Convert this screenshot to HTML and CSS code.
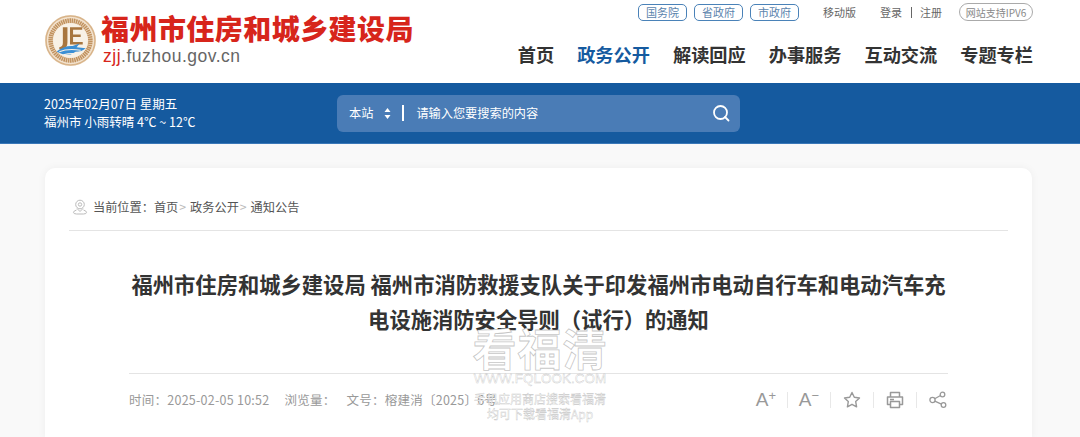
FILE: index.html
```html
<!DOCTYPE html>
<html lang="zh-CN">
<head>
    <meta charset="UTF-8">
    <title>福州市住房和城乡建设局</title>
    <link rel="stylesheet" href="styles.css">
</head>
<body>
    <header class="header">
        <a class="logo">
            <svg class="logo-mark" viewBox="0 0 52 52" width="53" height="53">
                <circle cx="26" cy="26" r="25" fill="#f3e3cf"/>
                <circle cx="26" cy="26" r="24" fill="none" stroke="#d8b48a" stroke-width="1.500"/>
                <circle cx="26" cy="26" r="19.500" fill="none" stroke="#c1925f" stroke-width="4.500" stroke-dasharray="1.500 .6"/>
                <circle cx="26" cy="26" r="17" fill="#f8f1e6"/>
                <path d="M18.500 13h4.500v15q0 5-4 6.500h-4v-2q3.500 0 3.500-4zM25.500 13h12v2.500h-9v4.500h7.500v2.500h-7.500v5h9.500v2.500h-12.500z" fill="#a8763f"/>
                <path d="M12 37q8-6 16-5.500l7-2.500-3 3.500 9 1q-4 3.500-10 3.500l-5 3q-8 .5-14-3.500z" fill="#3b8fd4"/>
                <path d="M15 37q8-3.500 21-1.500M19 40q6-1.500 12-1" fill="none" stroke="#f8f1e6" stroke-width="1.100"/>
            </svg>
            <div class="logo-text">
                <div class="logo-title">福州市住房和城乡建设局</div>
                <div class="logo-url"><span class="logo-url-red">zjj</span>.fuzhou.gov.cn</div>
            </div>
        </a>
        <div class="header-right">
            <div class="toplinks">
                <a class="pill">国务院</a>
                <a class="pill">省政府</a>
                <a class="pill">市政府</a>
                <a class="toplink mobile">移动版</a>
                <a class="toplink">登录</a>
                <span class="toplink-sep"></span>
                <a class="toplink">注册</a>
                <span class="ipv6">网站支持IPV6</span>
            </div>
            <nav class="nav">
                <a>首页</a>
                <a class="active">政务公开</a>
                <a>解读回应</a>
                <a>办事服务</a>
                <a>互动交流</a>
                <a>专题专栏</a>
            </nav>
        </div>
    </header>

    <div class="band">
        <div class="weather">
            <p>2025年02月07日 星期五</p>
            <p>福州市 小雨转晴 4℃ ~ 12℃</p>
        </div>
        <div class="search">
            <span class="scope">本站</span>
            <svg class="scope-arrows" viewBox="0 0 7 11" width="7" height="11">
                <path d="M3.500 0l3 4h-6zM3.500 11l-3-4h6z" fill="#fff"/>
            </svg>
            <span class="search-sep"></span>
            <span class="search-hint">请输入您要搜索的内容</span>
            <svg class="search-icon" viewBox="0 0 18 18" width="18" height="18">
                <circle cx="8.500" cy="8.500" r="6.500" fill="none" stroke="#fff" stroke-width="1.800"/>
                <path d="M13 13l3.500 3.500" stroke="#fff" stroke-width="1.800" stroke-linecap="round"/>
            </svg>
        </div>
    </div>

    <main class="card">
        <div class="crumbs">
            <svg class="crumb-icon" viewBox="0 0 16 16" width="16" height="16">
                <circle cx="8" cy="5.500" r="4.300" fill="none" stroke="#bbb" stroke-width="1"/>
                <circle cx="8" cy="5.500" r="1.700" fill="none" stroke="#bbb" stroke-width="1"/>
                <path d="M5 9.500l3 3 3-3M4.500 11q-3 1-3 2.300 0 1.700 3 1.700h7q3 0 3-1.700 0-1.300-3-2.300" fill="none" stroke="#bbb" stroke-width="1"/>
            </svg>
            <span>当前位置：</span>
            <a>首页</a><i>&gt;</i>
            <a>政务公开</a><i>&gt;</i>
            <a>通知公告</a>
        </div>
        <div class="article">
            <h1>福州市住房和城乡建设局 福州市消防救援支队关于印发福州市电动自行车和电动汽车充电设施消防安全导则（试行）的通知</h1>
            <div class="meta">
                <div class="meta-info">
                    <span>时间：2025-02-05 10:52</span>
                    <span class="views">浏览量：</span>
                    <span>文号：榕建消〔2025〕6号</span>
                </div>
                <div class="tools">
                    <span class="tool font-tool">A<sup>+</sup></span>
                    <span class="tool font-tool">A<sup>−</sup></span>
                    <span class="tool">
                        <svg viewBox="0 0 20 20" width="20" height="20">
                            <path d="M10 2.500l2.300 4.800 5.200.7-3.800 3.600.9 5.200-4.600-2.500-4.600 2.500.9-5.200-3.800-3.600 5.200-.7z" fill="none" stroke="#999" stroke-width="1.400" stroke-linejoin="round"/>
                        </svg>
                    </span>
                    <span class="tool">
                        <svg viewBox="0 0 20 20" width="20" height="20">
                            <path d="M5.500 7V2.500h9V7M5.500 14.500H2.500V7h15v7.500h-3M5.500 11.500h9v6h-9zM5 9.500h4" fill="none" stroke="#999" stroke-width="1.500" stroke-linejoin="round"/>
                        </svg>
                    </span>
                    <span class="tool">
                        <svg viewBox="0 0 20 20" width="20" height="20">
                            <circle cx="4.500" cy="10" r="2.600" fill="none" stroke="#999" stroke-width="1.300"/>
                            <circle cx="14.500" cy="4.500" r="2.300" fill="none" stroke="#999" stroke-width="1.300"/>
                            <circle cx="15.500" cy="15" r="2.300" fill="none" stroke="#999" stroke-width="1.300"/>
                            <path d="M6.700 8.700l5.800-3.200M6.800 11.200l6.600 3" stroke="#999" stroke-width="1.300"/>
                        </svg>
                    </span>
                </div>
            </div>
        </div>
    </main>

    <div class="watermark">
        <div class="wm-name">看福清</div>
        <div class="wm-site">WWW.FQLOOK.COM</div>
        <div class="wm-line">手机应用商店搜索看福清</div>
        <div class="wm-line">均可下载看福清App</div>
    </div>
</body>
</html>
```

FILE: styles.css
```css
* {
    margin: 0;
    padding: 0;
    box-sizing: border-box;
}

body {
    position: relative;
    background: #f9f9f9;
    font-family: "Noto Sans CJK SC", "Noto Sans", sans-serif;
    color: #333;
}

.header {
    height: 83px;
    background: #fff;
    display: flex;
    justify-content: space-between;
    padding: 0 47px 0 44px;
}

.logo {
    display: flex;
    align-items: center;
    gap: 4px;
    padding-bottom: 3px;
}

.logo-title {
    font-size: 28px;
    line-height: 32px;
    font-weight: 900;
    color: #d7251b;
    letter-spacing: 0.45px;
    white-space: nowrap;
    margin-top: -2px;
}

.logo-url {
    font-family: "Liberation Sans", sans-serif;
    font-size: 17.500px;
    line-height: 20px;
    letter-spacing: 0.5px;
    color: #666;
    margin-top: 2px;
    padding-left: 2px;
}

.logo-url-red {
    color: #d7251b;
}

.header-right {
    display: flex;
    flex-direction: column;
    align-items: flex-end;
    padding-top: 3px;
}

.toplinks {
    display: flex;
    align-items: center;
    height: 18px;
    font-size: 11px;
}

.pill {
    width: 49px;
    height: 17px;
    margin-right: 7px;
    border: 1px solid #4a82b8;
    border-radius: 5px;
    color: #5b84ad;
    display: flex;
    align-items: center;
    justify-content: center;
}

.toplink {
    color: #666;
}

.mobile {
    margin: 0 24px 0 17px;
}

.toplink-sep {
    width: 1px;
    height: 11px;
    background: #666;
    margin: 0 8.500px;
}

.ipv6 {
    width: 74px;
    height: 18px;
    margin-left: 17px;
    border: 1px solid #aaa;
    border-radius: 9px;
    color: #888;
    font-size: 10px;
    display: flex;
    align-items: center;
    justify-content: center;
}

.nav {
    display: flex;
    gap: 23px;
    margin-top: 19px;
    font-size: 18.200px;
    line-height: 28px;
    font-weight: 700;
    color: #333;
}

.nav .active {
    color: #155a9f;
}

.band {
    height: 61px;
    background: #155a9f;
    border-bottom: 1px solid #3a78b8;
    display: flex;
    align-items: center;
    padding: 0 0 0 44px;
    color: #fff;
}

.weather {
    width: 293px;
    font-size: 12.500px;
    line-height: 18px;
}

.search {
    width: 403px;
    height: 37px;
    background: #4a7cb6;
    border-radius: 6px;
    display: flex;
    align-items: center;
    padding: 0 10px 0 12px;
    font-size: 12.200px;
}

.scope-arrows {
    margin-left: 11px;
}

.search-sep {
    width: 2px;
    height: 16px;
    background: #fff;
    margin: 0 12px 0 11px;
}

.search-hint {
    flex: 1;
}

.card {
    margin: 24px 48px 0 45px;
    height: 270px;
    background: #fff;
    border-radius: 10px 10px 0 0;
    box-shadow: 0 0 8px rgba(0, 0, 0, 0.05);
    padding: 0 24px;
}

.crumbs {
    height: 63px;
    padding-top: 15px;
    border-bottom: 1px solid #e4e4e4;
    display: flex;
    align-items: center;
    font-size: 12.200px;
    color: #555;
}

.crumb-icon {
    margin: 0 5px 0 3px;
}

.crumbs i {
    font-style: normal;
    color: #bbb;
    margin: 0 4px 0 1px;
}

.article {
    padding: 0 60px;
}

h1 {
    margin: 35px 0 0;
    height: 108px;
    border-bottom: 1px solid #e4e4e4;
    font-size: 21.300px;
    line-height: 35px;
    font-weight: 700;
    color: #333;
    text-align: center;
}

.meta {
    display: flex;
    justify-content: space-between;
    align-items: center;
    height: 52px;
}

.meta-info {
    display: flex;
    font-size: 12.500px;
    letter-spacing: 0.25px;
    color: #999;
    white-space: nowrap;
    margin-top: -1px;
}

.views {
    margin: 0 11px 0 15px;
}

.tools {
    display: flex;
    align-items: center;
}

.tool {
    width: 43px;
    height: 16px;
    border-right: 1px solid #e8e8e8;
    display: flex;
    align-items: center;
    justify-content: center;
    color: #999;
}

.tool:last-child {
    border-right: 0;
    width: 31px;
    justify-content: flex-end;
}

.font-tool {
    font-size: 19px;
    font-family: "Liberation Sans", sans-serif;
}

.font-tool sup {
    font-size: 13px;
    line-height: 0;
    margin-top: -9px;
}

.watermark {
    position: absolute;
    left: 440px;
    top: 322px;
    width: 200px;
    text-align: center;
    color: #fff;
    -webkit-text-stroke: 0.4px rgba(140, 140, 140, 0.5);
    pointer-events: none;
}

.wm-name {
    font-size: 44px;
    line-height: 50px;
    font-weight: 700;
    letter-spacing: 1px;
    -webkit-text-stroke: 0.8px rgba(140, 140, 140, 0.5);
}

.wm-site {
    font-family: "Liberation Sans", sans-serif;
    font-size: 13.500px;
    line-height: 16px;
    margin-top: -1px;
}

.wm-line {
    font-size: 12px;
    line-height: 15px;
}

.wm-site + .wm-line {
    margin-top: 4px;
}
```
